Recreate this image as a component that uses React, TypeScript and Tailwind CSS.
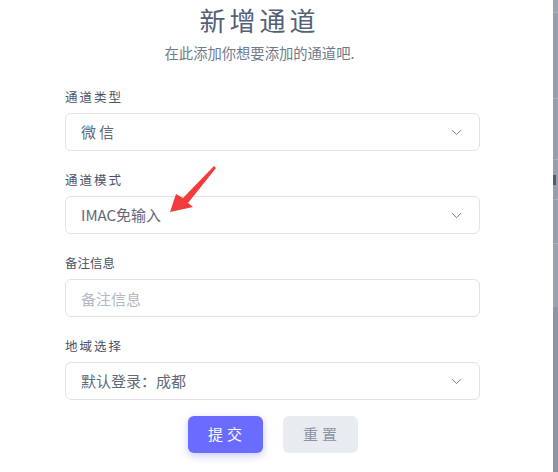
import { ChevronDown } from "lucide-react";

const FONT = { fontFamily: '"Noto Sans CJK SC", "Noto Sans", sans-serif' };

function Label({ text, spaced = true }: { text: string; spaced?: boolean }) {
  return (
    <div className={`h-[17px] text-[12.5px] leading-[17px] text-[#4a5466] ${spaced ? "tracking-[2px]" : ""}`}>
      {text}
    </div>
  );
}

function SelectBox({ value, spaced = false }: { value: string; spaced?: boolean }) {
  return (
    <div className="h-[38px] w-full flex items-center justify-between rounded-md border border-[#dfe3e9] bg-white pl-[15px] pr-[14px]">
      <span className={`text-[15px] text-[#5f697a] ${spaced ? "tracking-[3px]" : ""}`}>{value}</span>
      <ChevronDown className="h-[17px] w-[17px] text-[#737c8c]" strokeWidth={1.4} />
    </div>
  );
}

export default function App() {
  return (
    <div className="flex w-[558px] h-[472px] bg-white overflow-hidden" style={FONT}>
      <div className="relative w-[553px] h-full">
        {/* Header */}
        <div className="flex flex-col items-center pr-[34px] pt-[3px]">
          <h1 className="text-[26px] leading-[34px] tracking-[4px] text-[#536176] font-normal">新增通道</h1>
          <p className="mt-[6px] text-[14.3px] leading-[20px] text-[#6f7b8c]">在此添加你想要添加的通道吧.</p>
        </div>

        {/* Form */}
        <div className="ml-[65px] w-[415px] mt-[25px] flex flex-col">
          <Label text="通道类型" />
          <div className="mt-[8px]">
            <SelectBox value="微信" spaced />
          </div>

          <div className="mt-[20px]">
            <Label text="通道模式" />
          </div>
          <div className="mt-[8px]">
            <SelectBox value="IMAC免输入" />
          </div>

          <div className="mt-[20px]">
            <Label text="备注信息" spaced={false} />
          </div>
          <div className="mt-[8px]">
            <input
              type="text"
              placeholder="备注信息"
              className="h-[38px] w-full rounded-md border border-[#dfe3e9] bg-white px-[15px] text-[15px] text-[#5f697a] placeholder-[#b3b9c3] outline-none"
              style={FONT}
            />
          </div>

          <div className="mt-[20px]">
            <Label text="地域选择" />
          </div>
          <div className="mt-[8px]">
            <SelectBox value="默认登录：成都" />
          </div>

          <div className="mt-[16px] flex justify-center gap-[20px]">
            <button
              type="button"
              className="h-[37px] w-[75px] rounded-md bg-[#6a6bff] text-white text-[15px] tracking-[4px] pl-[4px] shadow-[0_3px_8px_rgba(106,107,255,0.35)]"
            >
              提交
            </button>
            <button
              type="button"
              className="h-[37px] w-[75px] rounded-md bg-[#e8ebef] text-[#8a94a5] text-[15px] tracking-[4px] pl-[4px]"
            >
              重置
            </button>
          </div>
        </div>

        {/* Red annotation arrow */}
        <svg className="absolute left-[166px] top-[164px]" width="52" height="52" viewBox="0 0 52 52">
          <polygon points="4,48 10,30 17,34 48,2 50,4 22,39 27,43" fill="#f23b3b" />
        </svg>
      </div>

      {/* Background page peeking behind the modal */}
      <div className="w-[5px] h-full flex flex-col bg-[#8f99a8]">
        <div className="h-[12px] bg-[#9ba4b1]" />
        <div className="h-[86px] bg-[#949eac] border-t border-[#a9b1bc]" />
        <div className="h-[61px] bg-[#949eac] border-t border-[#a9b1bc]" />
        <div className="h-[40px] bg-[#949eac] border-t border-[#a9b1bc] flex items-center">
          <div className="h-[10px] w-[3px] bg-[#4f5b6e]" />
        </div>
        <div className="h-[44px] bg-[#949eac] border-t border-[#a9b1bc]" />
        <div className="h-[64px] bg-[#98a1ae] border-t border-[#a9b1bc]" />
        <div className="flex-1 bg-[#8c96a5]" />
      </div>
    </div>
  );
}
